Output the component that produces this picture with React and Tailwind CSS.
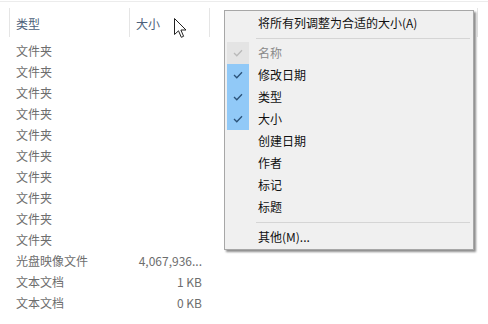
import React from "react";

const files = [
  ["文件夹", ""],
  ["文件夹", ""],
  ["文件夹", ""],
  ["文件夹", ""],
  ["文件夹", ""],
  ["文件夹", ""],
  ["文件夹", ""],
  ["文件夹", ""],
  ["文件夹", ""],
  ["文件夹", ""],
  ["光盘映像文件", "4,067,936..."],
  ["文本文档", "1 KB"],
  ["文本文档", "0 KB"],
];

const columns = [
  { label: "名称", state: "disabled" },
  { label: "修改日期", state: "on" },
  { label: "类型", state: "on" },
  { label: "大小", state: "on" },
  { label: "创建日期" },
  { label: "作者" },
  { label: "标记" },
  { label: "标题" },
];

const Check = ({ color }) => (
  <svg width="10" height="8" viewBox="0 0 10 8">
    <polyline points="1,4 3.8,6.8 9,1.2" fill="none" stroke={color} strokeWidth="1.3" />
  </svg>
);

const MenuItem = ({ label, state }) => (
  <div className="flex h-[22px] items-center">
    <div
      className={
        "ml-[2px] flex h-[22px] w-[22px] items-center justify-center " +
        (state === "on" ? "bg-[#91c9f7]" : state === "disabled" ? "bg-[#e4e4e4]" : "")
      }
    >
      {state === "on" && <Check color="#2b5279" />}
      {state === "disabled" && <Check color="#b9b9b9" />}
    </div>
    <span className={"ml-[9px] " + (state === "disabled" ? "text-[#8a8a8a]" : "text-[#111]")}>
      {label}
    </span>
  </div>
);

const Separator = ({ h }) => (
  <div className={"flex items-center pl-[31px] pr-[3px] " + h}>
    <div className="h-px w-full bg-[#d5d5d5]" />
  </div>
);

const App = () => {
  return (
    <div
      className="relative h-[324px] w-[488px] overflow-hidden bg-white text-[12px]"
      style={{ fontFamily: '"Noto Sans CJK SC", "Noto Sans", sans-serif' }}
    >
      <div className="mt-[1px] border-t border-[#ececec]" />

      {/* column header */}
      <div className="flex h-[38px] pt-[6px]">
        <div className="ml-[9px] h-[29px] w-px bg-[#e5e5e5]" />
        <div className="flex w-[119px] items-center pl-[6px] text-[#4c607a]">类型</div>
        <div className="h-[29px] w-px bg-[#e5e5e5]" />
        <div className="flex w-[79px] items-center pl-[6px] text-[#4c607a]">大小</div>
        <div className="h-[29px] w-px bg-[#e5e5e5]" />
        <div className="ml-[267px] h-[29px] w-px bg-[#e5e5e5]" />
      </div>

      {/* rows */}
      <div className="pl-[10px]">
        {files.map(([type, size], i) => (
          <div key={i} className="flex h-[21px] items-center text-[#6d6d6d]">
            <div className="w-[120px] pl-[6px]">{type}</div>
            <div className="w-[72px] text-right">{size}</div>
          </div>
        ))}
      </div>

      {/* context menu */}
      <div className="absolute left-[224px] top-[10px] w-[250px] border border-[#a7a7a7] bg-[#f0f0f0] py-[1px] shadow-[2px_2px_2px_rgba(0,0,0,0.45)]">
        <div className="flex h-[22px] items-center pl-[33px] text-[#111]">
          将所有列调整为合适的大小(A)
        </div>
        <Separator h="h-[8px]" />
        {columns.map((c) => (
          <MenuItem key={c.label} label={c.label} state={c.state} />
        ))}
        <Separator h="h-[8px]" />
        <div className="flex h-[22px] items-center pl-[33px] text-[#111]">其他(M)...</div>
      </div>

      {/* mouse cursor */}
      <svg className="absolute left-[174px] top-[18px]" width="14" height="21" viewBox="0 0 14 21">
        <path
          d="M0.5,0.5 L0.5,16.5 L4.5,12.8 L7.3,19.3 L9.6,18.3 L6.9,12 L12,12 Z"
          fill="white"
          stroke="#222"
          strokeWidth="1"
          strokeLinejoin="round"
        />
      </svg>
    </div>
  );
};

export default App;
